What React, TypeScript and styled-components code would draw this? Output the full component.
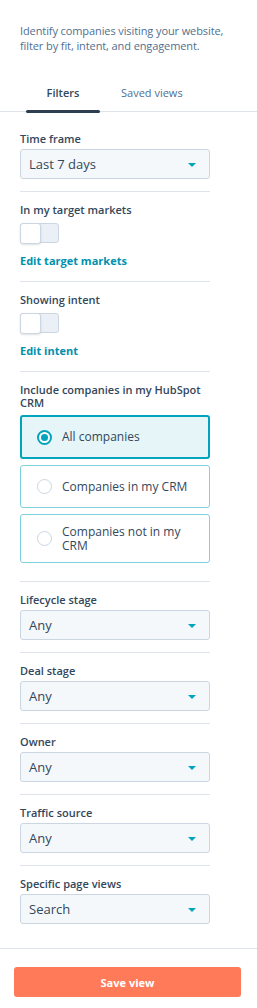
import React from "react";
import styled, { createGlobalStyle } from "styled-components";

const Global = createGlobalStyle`
  html, body { margin: 0; padding: 0; background: #ffffff; }
  body { font-family: "Open Sans", "Noto Sans", sans-serif; color: #33475b; }
  * { box-sizing: border-box; }
`;

const Panel = styled.div`
  width: 257px;
  display: flex;
  flex-direction: column;
  background: #fff;
`;

const Intro = styled.p`
  margin: 0;
  padding: 23px 20px 0 20px;
  font-size: 11px;
  line-height: 15px;
  color: #516f90;
  letter-spacing: -0.1px;
`;

const TabBar = styled.div`
  margin-top: 28px;
  display: flex;
  padding-left: 26px;
  border-bottom: 1px solid #dfe3eb;
`;

const Tab = styled.div<{ $active?: boolean }>`
  height: 30px;
  padding: 0 ${(p) => (p.$active ? 22 : 21)}px 8px;
  width: ${(p) => (p.$active ? "74px" : "auto")};
  display: flex;
  align-items: center;
  justify-content: center;
  font-size: 11px;
  font-weight: ${(p) => (p.$active ? 600 : 400)};
  color: ${(p) => (p.$active ? "#33475b" : "#516f90")};
  position: relative;
  &::after {
    content: "";
    display: ${(p) => (p.$active ? "block" : "none")};
    position: absolute;
    left: 0;
    right: 0;
    bottom: -2px;
    height: 3px;
    border-radius: 2px;
    background: #2d3e50;
  }
`;

const Filters = styled.div`
  padding: 9px 20px 12px 20px;
  width: 230px;
`;

const Section = styled.div<{ $last?: boolean }>`
  padding: 10px 0 12px 0;
  border-bottom: ${(p) => (p.$last ? "none" : "1px solid #dfe3eb")};
  display: flex;
  flex-direction: column;
`;

const Label = styled.div`
  font-size: 11px;
  font-weight: 600;
  line-height: 13px;
  padding: 1px 0 2px;
  color: #33475b;
`;

const SelectBox = styled.div`
  margin-top: 2px;
  height: 30px;
  border: 1px solid #cbd6e2;
  border-radius: 3px;
  background: #f5f8fa;
  display: flex;
  align-items: center;
  justify-content: space-between;
  padding: 0 13px 0 8px;
  font-size: 13px;
  color: #33475b;
`;

const Caret = styled.span`
  width: 0;
  height: 0;
  border-left: 4px solid transparent;
  border-right: 4px solid transparent;
  border-top: 4px solid #00a4bd;
  margin-top: 1px;
`;

const Toggle = styled.div`
  margin-top: 5px;
  width: 39px;
  height: 20px;
  display: flex;
  border: 1px solid #cbd6e2;
  border-radius: 3px;
  background: #eaf0f6;
`;

const Knob = styled.div`
  width: 21px;
  height: 21px;
  margin: -1px 0 0 -1px;
  border: 1px solid #cbd6e2;
  border-radius: 3px;
  background: #fff;
  box-shadow: 0 1px 2px rgba(45, 62, 80, 0.15);
`;

const EditLink = styled.a`
  margin-top: 10px;
  font-size: 11px;
  line-height: 16px;
  font-weight: 700;
  color: #0091ae;
  text-decoration: none;
`;

const RadioList = styled.div`
  margin-top: 4px;
  display: flex;
  flex-direction: column;
  gap: 6px;
  padding-bottom: 6px;
`;

const RadioCard = styled.div<{ $selected?: boolean; $tall?: boolean }>`
  min-height: ${(p) => (p.$tall ? 49 : p.$selected ? 44 : 43)}px;
  border: ${(p) => (p.$selected ? "2px solid #00a4bd" : "1px solid #7fd1de")};
  border-radius: 3px;
  background: ${(p) => (p.$selected ? "#e5f5f8" : "#fff")};
  display: flex;
  align-items: center;
  padding: ${(p) => (p.$selected ? "0 0 0 15px" : "0 0 0 16px")};
  gap: 10px;
  font-size: 12px;
  line-height: 14px;
  color: #33475b;
`;

const RadioDot = styled.span<{ $on?: boolean }>`
  flex: none;
  width: 15px;
  height: 15px;
  border-radius: 50%;
  border: ${(p) => (p.$on ? "2px solid #00a4bd" : "1px solid #cbd6e2")};
  background: #fff;
  display: flex;
  align-items: center;
  justify-content: center;
  &::after {
    content: "";
    display: ${(p) => (p.$on ? "block" : "none")};
    width: 7px;
    height: 7px;
    border-radius: 50%;
    background: #00a4bd;
  }
`;

const Footer = styled.div`
  border-top: 1px solid #dfe3eb;
  padding: 18px 16px 11px 14px;
`;

const SaveButton = styled.button`
  width: 227px;
  height: 30px;
  border: none;
  border-radius: 3px;
  background: #ff7a59;
  color: #fff;
  font-family: inherit;
  font-size: 11px;
  font-weight: 700;
`;

const Select = ({ value }: { value: string }) => (
  <SelectBox>
    <span>{value}</span>
    <Caret />
  </SelectBox>
);

export default function App() {
  return (
    <Panel>
      <Global />
      <Intro>
        Identify companies visiting your website, filter by fit, intent, and engagement.
      </Intro>
      <TabBar>
        <Tab $active>Filters</Tab>
        <Tab>Saved views</Tab>
      </TabBar>
      <Filters>
        <Section>
          <Label>Time frame</Label>
          <Select value="Last 7 days" />
        </Section>
        <Section>
          <Label>In my target markets</Label>
          <Toggle>
            <Knob />
          </Toggle>
          <EditLink>Edit target markets</EditLink>
        </Section>
        <Section>
          <Label>Showing intent</Label>
          <Toggle>
            <Knob />
          </Toggle>
          <EditLink>Edit intent</EditLink>
        </Section>
        <Section>
          <Label>Include companies in my HubSpot CRM</Label>
          <RadioList>
            <RadioCard $selected>
              <RadioDot $on />
              All companies
            </RadioCard>
            <RadioCard>
              <RadioDot />
              Companies in my CRM
            </RadioCard>
            <RadioCard $tall>
              <RadioDot />
              Companies not in my CRM
            </RadioCard>
          </RadioList>
        </Section>
        <Section>
          <Label>Lifecycle stage</Label>
          <Select value="Any" />
        </Section>
        <Section>
          <Label>Deal stage</Label>
          <Select value="Any" />
        </Section>
        <Section>
          <Label>Owner</Label>
          <Select value="Any" />
        </Section>
        <Section>
          <Label>Traffic source</Label>
          <Select value="Any" />
        </Section>
        <Section $last>
          <Label>Specific page views</Label>
          <Select value="Search" />
        </Section>
      </Filters>
      <Footer>
        <SaveButton>Save view</SaveButton>
      </Footer>
    </Panel>
  );
}
